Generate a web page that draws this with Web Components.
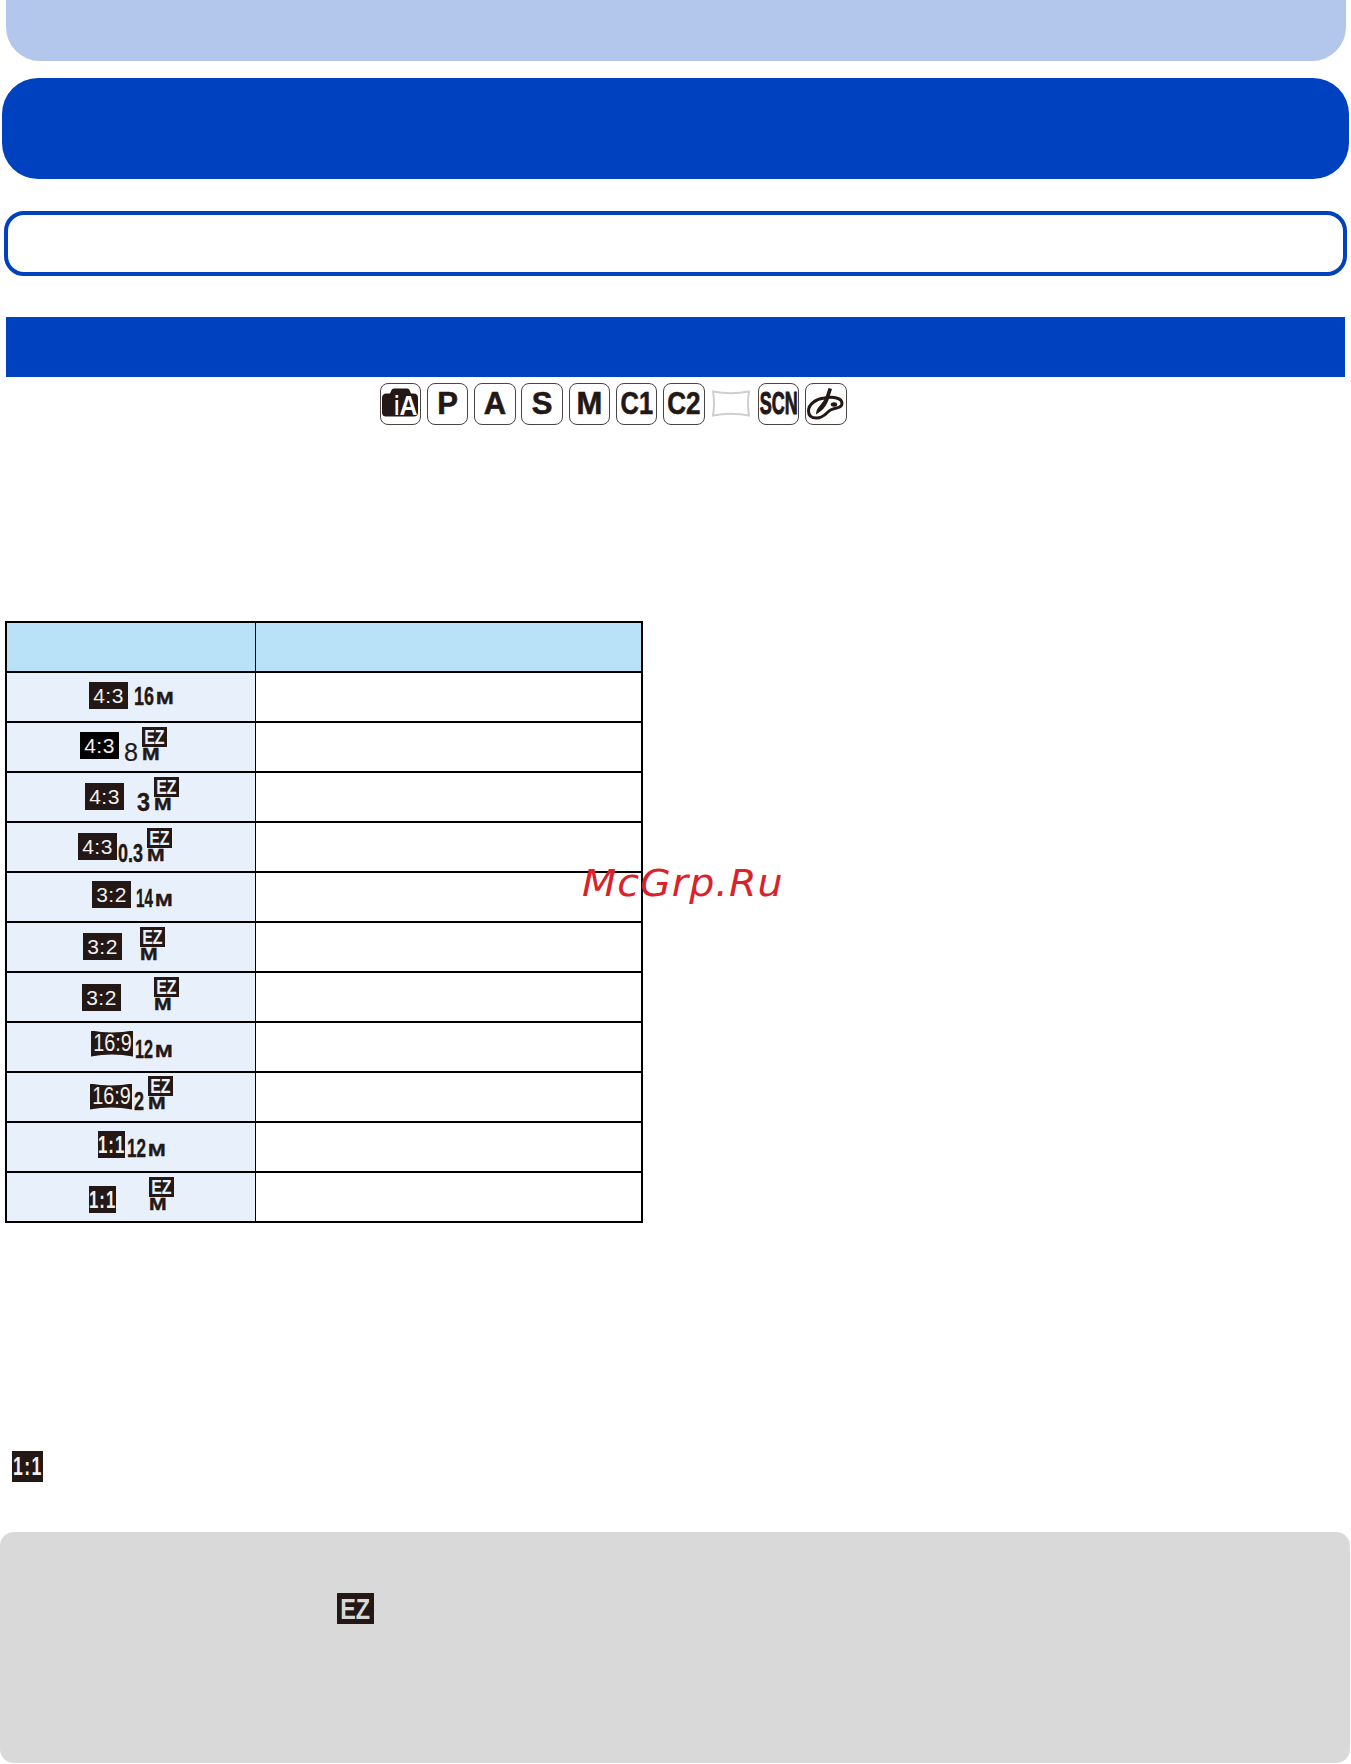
<!DOCTYPE html>
<html>
<head>
<meta charset="utf-8">
<title>Picture size</title>
<style>
  html, body { margin: 0; padding: 0; background: #fff; }
  body { font-family: "Liberation Sans", Arial, sans-serif; color: #231815; position: relative; height: 1764px; overflow: hidden; }
</style>
</head>
<body>
<manual-page>
  <top-tab></top-tab>
  <title-band></title-band>
  <outline-box></outline-box>
  <section-bar></section-bar>
  <mode-strip>
    <mode-icon kind="ia"></mode-icon>
    <mode-icon>P</mode-icon>
    <mode-icon>A</mode-icon>
    <mode-icon>S</mode-icon>
    <mode-icon>M</mode-icon>
    <mode-icon sx="0.82">C1</mode-icon>
    <mode-icon sx="0.84">C2</mode-icon>
    <mode-icon kind="pano"></mode-icon>
    <mode-icon sx="0.58" heavy>SCN</mode-icon>
    <mode-icon kind="palette"></mode-icon>
  </mode-strip>
  <size-table>
    <size-row head></size-row>
    <size-row pad="82"><ratio-tag top="9">4:3</ratio-tag><size-mark ml="6" top="13" num="16" w="20"></size-mark></size-row>
    <size-row pad="73"><ratio-tag top="9" black>4:3</ratio-tag><size-mark ml="5" top="4" num="8" w="14" thin ez></size-mark></size-row>
    <size-row pad="78"><ratio-tag top="10">4:3</ratio-tag><size-mark ml="13" top="4" num="3" w="13" ez></size-mark></size-row>
    <size-row pad="71"><ratio-tag top="10">4:3</ratio-tag><size-mark ml="1" top="5" num="0.3" w="25" ez></size-mark></size-row>
    <size-row pad="85"><ratio-tag top="8">3:2</ratio-tag><size-mark ml="5" top="15" num="14" w="17"></size-mark></size-row>
    <size-row pad="76"><ratio-tag top="10">3:2</ratio-tag><size-mark ml="18" top="4" ez></size-mark></size-row>
    <size-row pad="75"><ratio-tag top="11">3:2</ratio-tag><size-mark ml="33" top="4" ez></size-mark></size-row>
    <size-row pad="84"><ratio-tag top="8" kind="wide">16:9</ratio-tag><size-mark ml="2" top="16" num="12" w="18"></size-mark></size-row>
    <size-row pad="83"><ratio-tag top="11" kind="wide">16:9</ratio-tag><size-mark ml="2" top="3" num="2" w="10" ez></size-mark></size-row>
    <size-row pad="91"><ratio-tag top="8" kind="square">1:1</ratio-tag><size-mark ml="2" top="15" num="12" w="19"></size-mark></size-row>
    <size-row pad="82"><ratio-tag top="13" kind="square">1:1</ratio-tag><size-mark ml="33" top="4" ez></size-mark></size-row>
  </size-table>
  <square-note></square-note>
  <tip-box></tip-box>
</manual-page>
<water-mark>McGrp.Ru</water-mark>

<script>
class ManualPage extends HTMLElement {
  constructor() {
    super();
    this.attachShadow({ mode: 'open' });
    this.shadowRoot.innerHTML = `
      <style>:host { display: flex; flex-direction: column; align-items: flex-start; }</style>
      <slot></slot>`;
  }
}

class TopTab extends HTMLElement {
  constructor() {
    super();
    this.attachShadow({ mode: 'open' });
    this.shadowRoot.innerHTML = `
      <style>
        :host { display: block; box-sizing: border-box; width: 1340px; height: 61px; margin-left: 6px;
                background: #b3c7ed; border-radius: 0 0 34px 34px; }
      </style>`;
  }
}

class TitleBand extends HTMLElement {
  constructor() {
    super();
    this.attachShadow({ mode: 'open' });
    this.shadowRoot.innerHTML = `
      <style>
        :host { display: block; width: 1347px; height: 101px; margin: 17px 0 0 2px;
                background: #0041bf; border-radius: 36px; }
      </style>`;
  }
}

class OutlineBox extends HTMLElement {
  constructor() {
    super();
    this.attachShadow({ mode: 'open' });
    this.shadowRoot.innerHTML = `
      <style>
        :host { display: block; box-sizing: border-box; width: 1343px; height: 65px; margin: 32px 0 0 4px;
                border: 4px solid #0041bf; border-radius: 20px; }
      </style>`;
  }
}

class SectionBar extends HTMLElement {
  constructor() {
    super();
    this.attachShadow({ mode: 'open' });
    this.shadowRoot.innerHTML = `
      <style>
        :host { display: block; width: 1339px; height: 60px; margin: 41px 0 0 6px; background: #0041bf; }
      </style>`;
  }
}

class ModeStrip extends HTMLElement {
  constructor() {
    super();
    this.attachShadow({ mode: 'open' });
    this.shadowRoot.innerHTML = `
      <style>
        :host { display: flex; gap: 5.8px; margin: 6px 0 0 379.500px; }
      </style>
      <slot></slot>`;
  }
}

class ModeIcon extends HTMLElement {
  constructor() {
    super();
    this.attachShadow({ mode: 'open' });
  }

  connectedCallback() {
    const kind = this.getAttribute('kind');
    const sx = this.getAttribute('sx') || 1;
    const stroke = this.hasAttribute('heavy') ? 1 : 0.6;
    let inner = `<span class="txt" style="transform: scaleX(${sx})"><slot></slot></span>`;
    if (kind === 'ia') {
      inner = `
        <svg width="38" height="38" viewBox="0 0 38 38">
          <path fill="#231815" d="M1 13 Q1 8.500 5.500 8.500 L9 8.500 L10.500 5 Q11 3.500 13 3.500 L26 3.500 Q28 3.500 28.500 5 L30 8.500 L32.500 8.500 Q37 8.500 37 13 L37 27.500 Q37 31.500 33 31.500 L5 31.500 Q1 31.500 1 27.500 Z"/>
          <text x="13.200" y="30" font-family="Liberation Sans" font-weight="700" font-size="28" fill="#fff" textLength="5" lengthAdjust="spacingAndGlyphs">i</text>
          <text x="18.500" y="30" font-family="Liberation Sans" font-weight="700" font-size="27" fill="#fff" textLength="18" lengthAdjust="spacingAndGlyphs">A</text>
        </svg>`;
    } else if (kind === 'pano') {
      inner = `
        <svg width="38" height="27" viewBox="0 0 38 27">
          <path fill="#fff" stroke="#cfcfcf" stroke-width="2" d="M1 1.500 Q19 5 37 1.500 Q35 13.500 37 25.500 Q19 22 1 25.500 Q3 13.500 1 1.500 Z"/>
        </svg>`;
    } else if (kind === 'palette') {
      inner = `
        <svg width="41" height="41" viewBox="0 0 41 41">
          <path fill="none" stroke="#231815" stroke-width="3" d="M3.500 28 C3.500 21 11 16 19.500 15 C28 13.500 37 14.500 37 20.500 C37 25.500 30.500 24.500 25.500 27 C21.500 29 19.500 35 11.500 35 C6.500 35 3.500 32.500 3.500 28 Z"/>
          <path fill="#231815" d="M23.500 5 L27 6 L23.500 17 Q21 24 16 28 L11 31.500 Q11 26.500 15 22.500 Q19 18 20.500 14 Z"/>
          <ellipse cx="29" cy="21.500" rx="3.200" ry="2.200" fill="#231815"/>
        </svg>`;
    }
    const border = kind === 'pano' ? 'none' : '1.5px solid #4a4442';
    this.shadowRoot.innerHTML = `
      <style>
        :host { display: flex; align-items: center; justify-content: center; box-sizing: border-box;
                width: 41.500px; height: 41.500px; border: ${border}; border-radius: 8px; overflow: hidden;
                font: 700 31px/30px "Liberation Sans", Arial, sans-serif; color: #231815;
                -webkit-text-stroke: ${stroke}px #231815; }
        .txt { display: inline-block; white-space: nowrap; }
        svg { display: block; flex: none; -webkit-text-stroke: 0; }
      </style>
      ${inner}`;
  }
}

class SizeTable extends HTMLElement {
  constructor() {
    super();
    this.attachShadow({ mode: 'open' });
    this.shadowRoot.innerHTML = `
      <style>
        :host { display: block; box-sizing: border-box; width: 638px; margin: 196px 0 0 5px;
                border: 2px solid #000; }
      </style>
      <slot></slot>`;
  }
}

class SizeRow extends HTMLElement {
  constructor() {
    super();
    this.attachShadow({ mode: 'open' });
  }

  connectedCallback() {
    const head = this.hasAttribute('head');
    const pad = this.getAttribute('pad') || 0;
    this.shadowRoot.innerHTML = `
      <style>
        :host { display: grid; grid-template-columns: 249px 1fr; box-sizing: border-box;
                height: ${head ? 48 : 50}px; ${head ? '' : 'border-top: 2px solid #000;'}
                background: ${head ? '#b9e2f9' : '#fff'}; }
        .first { display: flex; align-items: flex-start; box-sizing: border-box; padding-left: ${pad}px;
                 border-right: 1.500px solid #000; background: ${head ? '#b9e2f9' : '#e8f1fb'}; }
      </style>
      <div class="first"><slot></slot></div>
      <div></div>`;
  }
}

class RatioTag extends HTMLElement {
  constructor() {
    super();
    this.attachShadow({ mode: 'open' });
  }

  connectedCallback() {
    const top = this.getAttribute('top') || 0;
    this.shadowRoot.innerHTML = `
      <style>
        :host { display: flex; flex: none; align-items: center; justify-content: center;
                width: 39px; height: 27px; margin-top: ${top}px; background: #231815; color: #f1efee;
                font: 400 21px/27px "Liberation Sans", Arial, sans-serif; letter-spacing: .5px; white-space: nowrap; }
        :host([black]) { background: #000; }
        :host([kind="wide"]) { width: 42px; height: 26px; font-size: 23px; letter-spacing: 0;
                clip-path: path("M0 0 Q21 4 42 0 L42 26 Q21 22 0 26 Z"); }
        :host([kind="wide"]) span { transform: scaleX(.86); }
        :host([kind="square"]) { width: 27px; font-weight: 700; font-size: 24px; letter-spacing: 1.5px; }
        :host([kind="square"]) span { transform: scaleX(.7); }
        span { display: inline-block; }
      </style>
      <span><slot></slot></span>`;
  }
}

class SizeMark extends HTMLElement {
  constructor() {
    super();
    this.attachShadow({ mode: 'open' });
  }

  connectedCallback() {
    const num = this.getAttribute('num');
    const w = this.getAttribute('w') || 0;
    const ez = this.hasAttribute('ez');
    const weight = this.hasAttribute('thin') ? 400 : 700;
    const digits = num ? `
      <svg width="${w}" height="19" viewBox="0 0 ${w} 19">
        <text y="19" font-family="Liberation Sans" font-weight="${weight}" font-size="26" fill="#231815"
          stroke="#231815" stroke-width="${weight === 700 ? 0.4 : 0.2}"
          textLength="${w}" lengthAdjust="spacingAndGlyphs">${num}</text>
      </svg>` : '';
    const mega = `<span class="m"><span>M</span></span>`;
    const right = ez
      ? `<div class="stack"><span class="ez"><span>EZ</span></span>${mega}</div>`
      : mega;
    this.shadowRoot.innerHTML = `
      <style>
        :host { display: flex; flex: none; align-items: flex-end; gap: ${ez ? 4 : 2}px;
                margin-left: ${this.getAttribute('ml') || 0}px; margin-top: ${this.getAttribute('top') || 0}px;
                font-family: "Liberation Sans", Arial, sans-serif; }
        svg { display: block; overflow: visible; }
        .stack { display: flex; flex-direction: column; align-items: flex-start; gap: 2px; }
        .ez { display: flex; align-items: center; justify-content: center; width: 25px; height: 20px;
              background: #231815; color: #e8f1fb; font: 700 21px/20px "Liberation Sans", Arial, sans-serif; }
        .ez span { display: inline-block; transform: scaleX(.76); }
        .m { display: block; width: 16px; height: 12px; color: #231815;
             font: 700 16px/12px "Liberation Sans", Arial, sans-serif; -webkit-text-stroke: .4px #231815; }
        .m span { display: inline-block; transform-origin: 0 50%; transform: scaleX(1.32); }
      </style>
      ${digits}${right}`;
  }
}

class SquareNote extends HTMLElement {
  constructor() {
    super();
    this.attachShadow({ mode: 'open' });
    this.shadowRoot.innerHTML = `
      <style>
        :host { display: flex; align-items: center; justify-content: center; width: 31px; height: 31px;
                margin: 228px 0 0 12px; background: #231815; color: #f1efee;
                font: 700 26px/31px "Liberation Sans", Arial, sans-serif; letter-spacing: 2px; }
        span { display: inline-block; transform: scaleX(.68); }
      </style>
      <span>1:1</span>`;
  }
}

class TipBox extends HTMLElement {
  constructor() {
    super();
    this.attachShadow({ mode: 'open' });
    this.shadowRoot.innerHTML = `
      <style>
        :host { display: block; box-sizing: border-box; width: 1350px; height: 231px; margin-top: 50px;
                padding: 61px 0 0 337px; background: #d9d9d9; border-radius: 14px; }
        .ez { display: flex; align-items: center; justify-content: center; width: 37px; height: 31px;
              background: #231815; color: #d9d9d9; font: 700 30px/31px "Liberation Sans", Arial, sans-serif; }
        .ez span { display: inline-block; transform: scaleX(.78); }
      </style>
      <div class="ez"><span>EZ</span></div>`;
  }
}

class WaterMark extends HTMLElement {
  constructor() {
    super();
    this.attachShadow({ mode: 'open' });
    this.shadowRoot.innerHTML = `
      <style>
        :host { position: absolute; left: 582px; top: 861px; color: #d9222a; white-space: nowrap;
                font: italic 400 37px/46px "DejaVu Sans", sans-serif; letter-spacing: 1px;
                transform-origin: 0 50%; transform: scaleX(1.07); }
      </style>
      <slot></slot>`;
  }
}

customElements.define('manual-page', ManualPage);
customElements.define('top-tab', TopTab);
customElements.define('title-band', TitleBand);
customElements.define('outline-box', OutlineBox);
customElements.define('section-bar', SectionBar);
customElements.define('mode-strip', ModeStrip);
customElements.define('mode-icon', ModeIcon);
customElements.define('size-table', SizeTable);
customElements.define('size-row', SizeRow);
customElements.define('ratio-tag', RatioTag);
customElements.define('size-mark', SizeMark);
customElements.define('square-note', SquareNote);
customElements.define('tip-box', TipBox);
customElements.define('water-mark', WaterMark);
</script>
</body>
</html>
